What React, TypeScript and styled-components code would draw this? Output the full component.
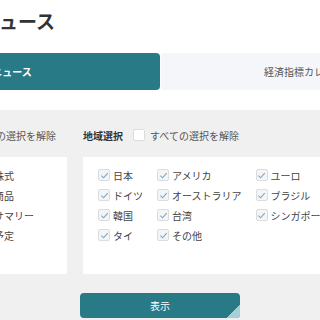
import React from "react";
import styled, { createGlobalStyle } from "styled-components";

const GlobalStyle = createGlobalStyle`
  html, body {
    margin: 0;
    padding: 0;
    background: #ffffff;
  }
  body {
    font-family: "Noto Sans CJK JP", "Noto Sans", sans-serif;
    color: #333333;
  }
`;

const Page = styled.div`
  width: 320px;
  height: 320px;
  overflow: hidden;
  background: #ffffff;
`;

const Title = styled.h1`
  margin: 8px 0 0 -20px;
  font-size: 19px;
  line-height: 25px;
  font-weight: 700;
  color: #333333;
  white-space: nowrap;
`;

const Tabs = styled.div`
  display: grid;
  grid-template-columns: 296px 296px;
  column-gap: 1px;
  margin: 20px 0 0 -136px;
  width: 593px;
`;

const Tab = styled.div<{ $active?: boolean }>`
  height: 37px;
  display: flex;
  align-items: center;
  justify-content: center;
  border-radius: 4px;
  font-size: 10px;
  font-weight: ${(p) => (p.$active ? 700 : 400)};
  color: ${(p) => (p.$active ? "#ffffff" : "#555555")};
  background: ${(p) => (p.$active ? "#287a87" : "#f5f6f9")};
  white-space: nowrap;
`;

const Filters = styled.section`
  margin-top: 20px;
  background: #f0f0f0;
  padding-top: 17px;
  height: 300px;
`;

const Columns = styled.div`
  display: grid;
  grid-template-columns: 167px 300px;
  column-gap: 16px;
  margin-left: -100px;
`;

const HeaderRow = styled.div`
  display: flex;
  align-items: center;
  height: 16px;
  margin-bottom: 14px;
  font-size: 10px;
  white-space: nowrap;
`;

const GroupLabel = styled.span`
  font-weight: 700;
  color: #333333;
  margin-right: 10px;
`;

const ClearLabel = styled.span`
  color: #555555;
  margin-left: 5px;
`;

const Box = styled.span<{ $checked?: boolean }>`
  display: inline-flex;
  align-items: center;
  justify-content: center;
  width: 12px;
  height: 12px;
  box-sizing: border-box;
  border: 1px solid #dcdcdc;
  border-radius: 2px;
  background: ${(p) => (p.$checked ? "#f4f5f7" : "#ffffff")};
  flex: none;
`;

const Panel = styled.div`
  background: #ffffff;
  height: 117px;
  box-sizing: border-box;
  padding: 8px 0 0 15px;
`;

const OptionGrid = styled.div<{ $cols: string }>`
  display: grid;
  grid-template-columns: ${(p) => p.$cols};
  grid-auto-flow: row;
  column-gap: 14px;
  justify-content: start;
`;

const Option = styled.label`
  display: flex;
  align-items: center;
  gap: 3px;
  height: 20px;
  font-size: 10px;
  color: #444444;
  white-space: nowrap;
`;

const Actions = styled.div`
  display: flex;
  justify-content: center;
  margin-top: 19px;
`;

const ShowButton = styled.button`
  position: relative;
  width: 160px;
  height: 25px;
  border: none;
  border-radius: 4px;
  background: #287a87;
  color: #ffffff;
  font-family: inherit;
  font-size: 10px;
  overflow: hidden;
  cursor: pointer;

  &::after {
    content: "";
    position: absolute;
    right: 0;
    bottom: 0;
    width: 13px;
    height: 13px;
    background: linear-gradient(135deg, transparent 50%, #a6d0d5 50%);
  }
`;

const Check: React.FC<{ checked?: boolean }> = ({ checked }) => (
  <Box $checked={checked}>
    {checked && (
      <svg width="9" height="9" viewBox="0 0 10 10">
        <path d="M1.5 5.2 L4 7.6 L8.6 2.4" fill="none" stroke="#7aa6c8" strokeWidth="1.2" />
      </svg>
    )}
  </Box>
);

const categories = ["為替", "株式", "債券", "商品", "金利", "サマリー", "経済", "予定"];
const regions = [
  "日本", "アメリカ", "ユーロ",
  "ドイツ", "オーストラリア", "ブラジル",
  "韓国", "台湾", "シンガポール",
  "タイ", "その他",
];

const App: React.FC = () => {
  return (
    <Page>
      <GlobalStyle />
      <Title>ニュース</Title>
      <Tabs>
        <Tab $active>ニュース</Tab>
        <Tab>経済指標カレンダー</Tab>
      </Tabs>
      <Filters>
        <Columns>
          <div>
            <HeaderRow>
              <GroupLabel>種類選択</GroupLabel>
              <Check />
              <ClearLabel>すべての選択を解除</ClearLabel>
            </HeaderRow>
            <Panel>
              <OptionGrid $cols="50px auto">
                {categories.map((c) => (
                  <Option key={c}>
                    <Check checked />
                    {c}
                  </Option>
                ))}
              </OptionGrid>
            </Panel>
          </div>
          <div>
            <HeaderRow>
              <GroupLabel>地域選択</GroupLabel>
              <Check />
              <ClearLabel>すべての選択を解除</ClearLabel>
            </HeaderRow>
            <Panel>
              <OptionGrid $cols="repeat(3, auto)">
                {regions.map((r) => (
                  <Option key={r}>
                    <Check checked />
                    {r}
                  </Option>
                ))}
              </OptionGrid>
            </Panel>
          </div>
        </Columns>
        <Actions>
          <ShowButton type="button">表示</ShowButton>
        </Actions>
      </Filters>
    </Page>
  );
};

export default App;
